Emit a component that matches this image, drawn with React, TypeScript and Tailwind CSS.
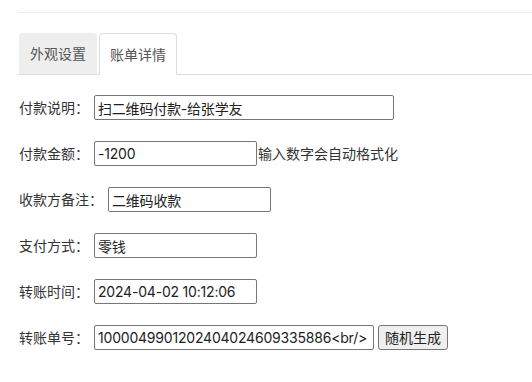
const rows = [
  { label: '付款说明：', value: '扫二维码付款-给张学友', width: 'w-[300px]' },
  { label: '付款金额：', value: '-1200', width: 'w-[163px]', hint: '输入数字会自动格式化' },
  { label: '收款方备注：', value: '二维码收款', width: 'w-[163px]' },
  { label: '支付方式：', value: '零钱', width: 'w-[163px]' },
  { label: '转账时间：', value: '2024-04-02 10:12:06', width: 'w-[163px]' },
  { label: '转账单号：', value: '1000049901202404024609335886<br/>', width: 'w-[280px]', button: '随机生成' },
];

export default function App() {
  return (
    <div className="w-[532px] h-[382px] bg-white overflow-hidden pl-[18px] pt-[12px] text-[14px] text-[#333] font-['Inter','Noto_Sans_CJK_SC',sans-serif]">
      <div className="h-px bg-[#eeeeee]" />

      {/* Tabs */}
      <div className="mt-[20px] flex border-b border-[#dddddd] pl-px">
        <div className="h-[41px] w-[78px] -mb-px flex items-center justify-center bg-[#eeeeee] rounded-t-[4px] text-[#555]">
          外观设置
        </div>
        <div className="ml-[2px] h-[42px] w-[78px] -mb-px flex items-center justify-center bg-white border border-[#dddddd] border-b-white rounded-t-[4px] text-[#555]">
          账单详情
        </div>
      </div>

      {/* Form */}
      <div className="mt-[20px] flex flex-col gap-[21px] pl-px">
        {rows.map((row) => (
          <div key={row.label} className="flex items-center h-[25px]">
            <span className="leading-[25px] mr-[5px] whitespace-nowrap">{row.label}</span>
            <input
              readOnly
              value={row.value}
              className={`${row.width} h-[25px] border border-[#767676] rounded-[2px] px-[3px] text-[14px] tracking-[-0.2px] text-[#222] outline-none`}
            />
            {row.hint && <span className="ml-px whitespace-nowrap">{row.hint}</span>}
            {row.button && (
              <button className="ml-[4px] h-[25px] px-[6px] border border-[#767676] rounded-[3px] bg-[#efefef] text-[#222] text-[14px] leading-none">
                {row.button}
              </button>
            )}
          </div>
        ))}
      </div>
    </div>
  );
}
